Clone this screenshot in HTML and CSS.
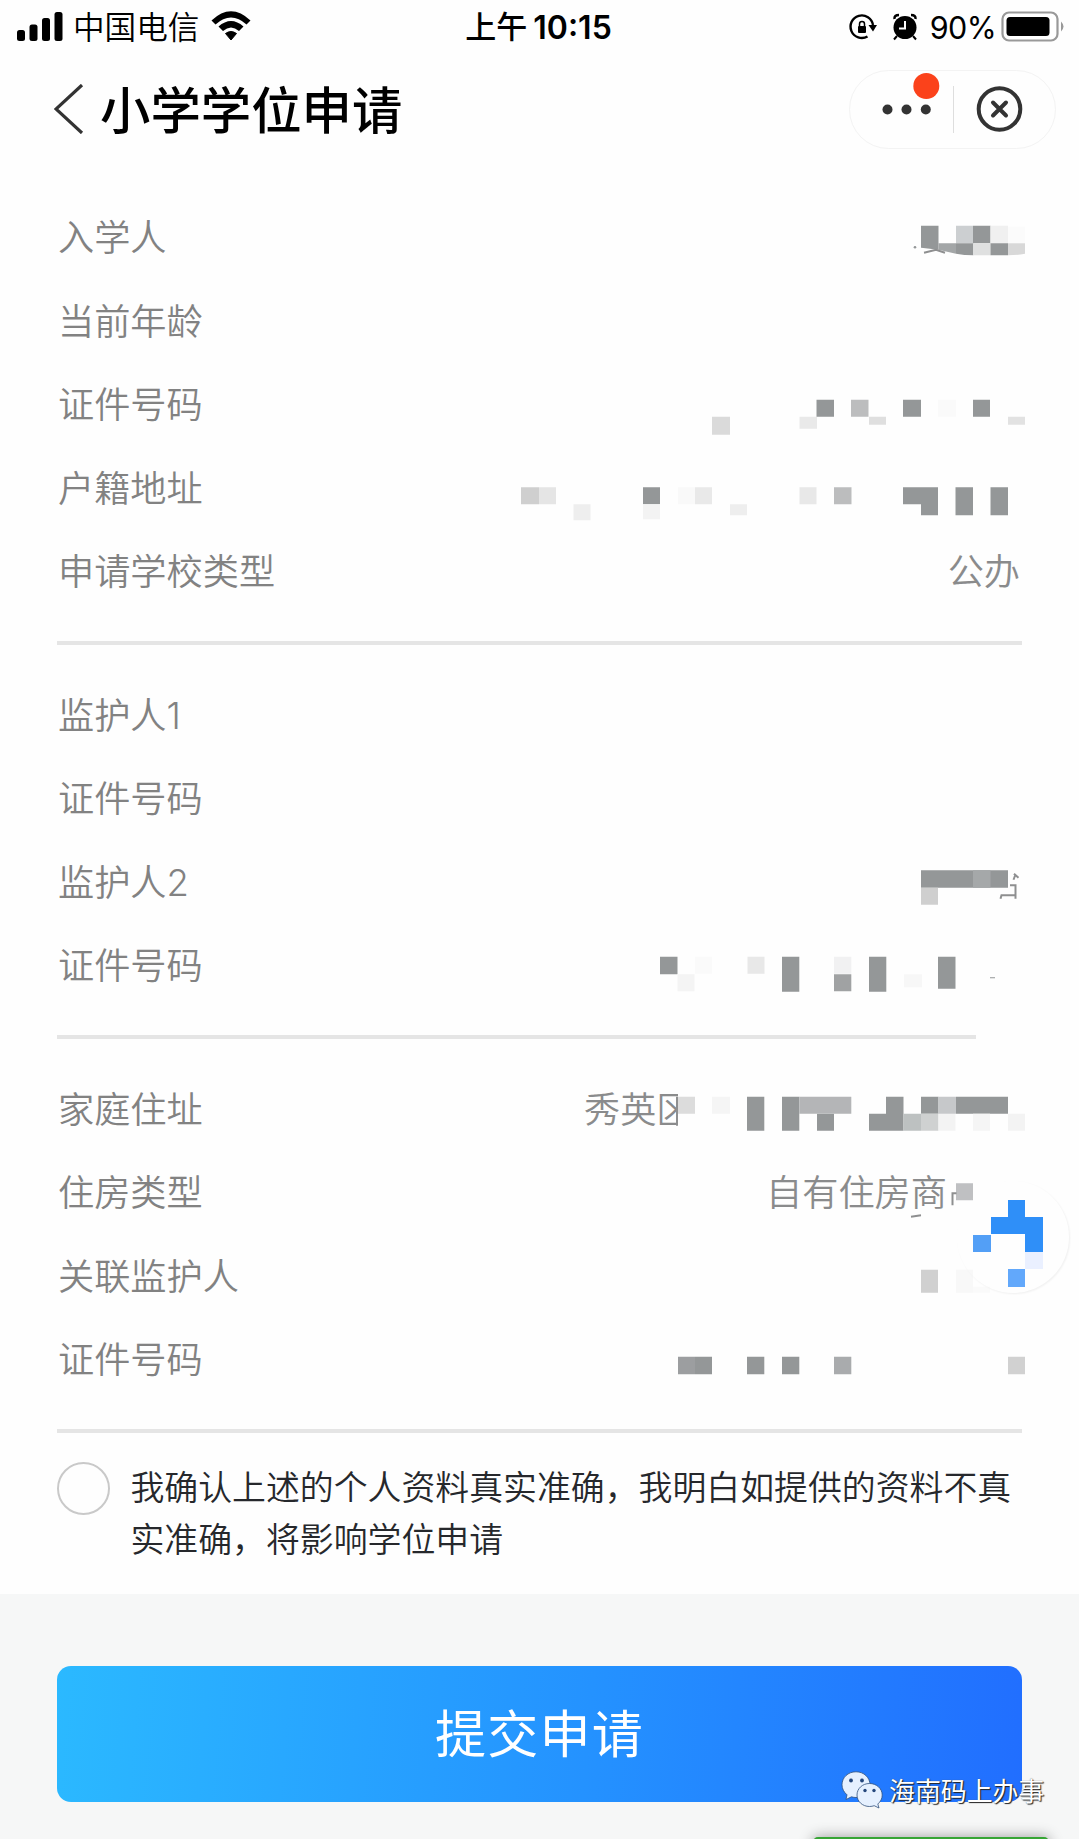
FILE: index.html
```html
<!DOCTYPE html>
<html lang="zh-CN">
<head>
<meta charset="utf-8">
<title>小学学位申请</title>
<link rel="stylesheet" href="styles.css">
</head>
<body>
<div class="screen">
  <header class="status">
    <div class="status-left">
      <svg class="signal" width="46" height="30" viewBox="0 0 46 30"><rect x="0" y="19" width="8" height="11" rx="2.5"/><rect x="12.5" y="13.500" width="8" height="16.500" rx="2.5"/><rect x="25" y="7" width="8" height="23" rx="2.5"/><rect x="37.500" y="1" width="8" height="29" rx="2.5"/></svg>
      <span class="carrier">中国电信</span>
      <svg class="wifi" width="40" height="30" viewBox="0 0 40 30"><path d="M.5 9.500Q20-9 39.500 9.500L35.500 13.500Q20-.5 4.500 13.500Z"/><path d="M7.500 15.500Q20 4.500 32.500 15.500L28 20Q20 13 12 20Z"/><path d="M14.500 22.500Q20 18.500 25.500 22.500L20 29Z" stroke="#000" stroke-linejoin="round"/></svg>
    </div>
    <div class="clock"><span class="ampm">上午</span><span class="time">10:15</span></div>
    <div class="status-right">
      <svg width="30" height="30" viewBox="0 0 30 30"><path d="M19.500 24.500A11.300 11.300 0 1 1 25 13" fill="none" stroke="#000" stroke-width="2.400"/><path d="M20.500 13h8.500l-4 6.500z"/><rect x="10" y="14" width="8" height="7" rx="1"/><path d="M11.500 14.500v-2.500a2.500 2.500 0 0 1 5 0v2.500" fill="none" stroke="#000" stroke-width="1.500"/></svg>
      <svg class="alarm" width="26" height="28" viewBox="0 0 26 28"><circle cx="13" cy="14.500" r="11.500"/><path d="M2.500 6Q2 2 7 2M23.500 6Q24 2 19 2" fill="none" stroke="#000" stroke-width="2.500"/><path d="M5 23l-3 3.500M21 23l3 3.500" stroke="#000" stroke-width="2"/><path d="M13 8v7.500H7" fill="none" stroke="#fff" stroke-width="2"/></svg>
      <span class="percent">90%</span>
      <svg class="battery" width="64" height="32" viewBox="0 0 64 32"><rect x="1.500" y="1.500" width="55" height="28" rx="6.500" fill="#fff" stroke="#999" stroke-width="2.200"/><rect x="5.500" y="6" width="43" height="19" rx="3.500"/><path d="M60 10.500q5 5 0 10z" fill="#999"/></svg>
    </div>
  </header>
  <nav class="navbar">
    <svg class="back" width="30" height="50" viewBox="0 0 30 50"><path d="M28 1L2 25l26 24" fill="none" stroke="#333" stroke-width="3.200"/></svg>
    <h1 class="title">小学学位申请</h1>
    <div class="capsule">
      <svg class="more" width="103" height="76" viewBox="0 0 103 76"><g fill="#333"><circle cx="37.500" cy="38.500" r="5"/><circle cx="56.500" cy="38.500" r="5"/><circle cx="75.800" cy="38.500" r="5"/></g><circle cx="76.300" cy="15" r="13" fill="#fb421b"/></svg>
      <svg class="close" width="102" height="76" viewBox="0 0 102 76"><path d="M.5 15v47" stroke="#dedede"/><circle cx="46.500" cy="38" r="20.800" fill="none" stroke="#333" stroke-width="4"/><path d="M40 31.500l13 13m0-13l-13 13" stroke="#333" stroke-width="4" stroke-linecap="round"/></svg>
    </div>
  </nav>
  <main class="form">
    <section class="group">
      <div class="row"><span class="label">入学人</span>
        <svg class="mosaic" width="122" height="83.5" viewBox="900 196.25 122 83.5">
          <path d="M921 226h17.500v24l-17.500-2z"/><rect x="956" y="226" width="17" height="17.500" fill="#cccfd1"/><rect x="973" y="226" width="17.500" height="17.500"/><rect x="990.500" y="226" width="17.500" height="17.500" fill="#f0f0f0"/><rect x="1008" y="227" width="17" height="16.500" fill="#fbfbfb"/>
          <path d="M938.500 243.500H956V254q-9-2-17.500-4z" fill="#a3a6a7"/><path d="M956 243.500h17.300v12q-9 0-17.300-1.500z"/><rect x="973.300" y="243.500" width="17.200" height="12" fill="#dfe0e0"/><rect x="990.500" y="243.500" width="17.500" height="12"/><path d="M1008 243.500h17v10.500q-8 1.500-17 1.500z" fill="#d8d8d8"/>
          <circle cx="915" cy="247.500" r="1.300"/><path d="M924 253l12-3 9 3" class="stroke"/>
        </svg></div>
      <div class="row"><span class="label">当前年龄</span></div>
      <div class="row"><span class="label">证件号码</span>
        <svg class="mosaic" width="322" height="83.5" viewBox="700 363.25 322 83.5">
          <rect x="712" y="417" width="18" height="18" fill="#dadada"/><rect x="799.500" y="417" width="17.500" height="12" fill="#e9e9e9"/><rect x="816.500" y="400" width="17.500" height="17"/><rect x="851" y="400" width="17.500" height="17" fill="#bcbdbe"/><rect x="869" y="417" width="17" height="8" fill="#dfdfdf"/><rect x="903" y="400" width="18" height="17"/><rect x="938" y="400" width="18" height="17" fill="#fafafa"/><rect x="973" y="400" width="17" height="17"/><rect x="1008" y="417" width="17" height="8" fill="#e2e2e2"/>
        </svg></div>
      <div class="row"><span class="label">户籍地址</span>
        <svg class="mosaic" width="522" height="83.5" viewBox="500 446.75 522 83.5">
          <rect x="521" y="487" width="18" height="17" fill="#cfcfcf"/><rect x="539" y="487" width="17" height="17" fill="#e5e5e5"/><rect x="573.500" y="504" width="17" height="16" fill="#eee"/><rect x="643" y="487" width="17" height="17"/><rect x="643" y="504" width="17" height="15" fill="#f3f3f3"/><rect x="678" y="487" width="17" height="17" fill="#f9f9f9"/><rect x="695" y="487" width="17" height="17" fill="#e9e9e9"/><rect x="730" y="504" width="17" height="11" fill="#eee"/><rect x="799.500" y="487" width="17" height="17" fill="#e8e8e8"/><rect x="834" y="487" width="17.500" height="17" fill="#bcbdbe"/><path d="M903 487h35v28h-17v-11h-18zM955.500 487h17.500v28h-17.500zM990.500 487h17.500v28h-17.500z"/>
        </svg></div>
      <div class="row"><span class="label">申请学校类型</span><span class="value value-end">公办</span></div>
    </section>
    <section class="group group-short">
      <div class="row"><span class="label">监护人<span class="digit">1</span></span></div>
      <div class="row"><span class="label">证件号码</span></div>
      <div class="row"><span class="label">监护人<span class="digit">2</span></span>
        <svg class="mosaic" width="122" height="83.5" viewBox="900 840.25 122 83.5">
          <rect x="921" y="869.500" width="87" height="17.500"/><rect x="973" y="869.500" width="17.500" height="17.500" fill="#a5a8a9"/><rect x="921" y="887" width="17" height="17" fill="#cfcfcf"/><path class="stroke" d="M1013.500 879l1.500-4m-1-2l4.500 4M1010 884.500h5.500V898m0-3.500h-14l-1 3.500"/>
        </svg></div>
      <div class="row"><span class="label">证件号码</span>
        <svg class="mosaic" width="382" height="83.5" viewBox="640 923.75 382 83.5">
          <rect x="660" y="956.500" width="17.500" height="17.500"/><rect x="695" y="956.500" width="17" height="17" fill="#fafafa"/><rect x="677.500" y="974" width="17" height="17" fill="#f4f4f4"/><rect x="747.500" y="956.500" width="17" height="17" fill="#e8e8e8"/><rect x="782" y="956.500" width="17.300" height="35"/><rect x="834" y="956.500" width="17.300" height="17" fill="#f1f1f2"/><rect x="834" y="974" width="17.300" height="17" fill="#a0a2a3"/><rect x="869" y="956.500" width="17.300" height="35"/><rect x="904" y="974" width="18" height="13" fill="#f7f7f7"/><rect x="938" y="956.500" width="17.500" height="32"/><rect x="990" y="977" width="5" height="1"/>
        </svg></div>
    </section>
    <section class="group">
      <div class="row"><span class="label">家庭住址</span><span class="value value-covered">秀英区</span>
        <svg class="mosaic" width="344" height="83.5" viewBox="678 1067.25 344 83.5">
          <rect x="678" y="1086" width="34" height="50" fill="#fefefe"/>
          <rect x="678" y="1096" width="17" height="17" fill="#dcdcdc"/><rect x="712" y="1096" width="18" height="17" fill="#f5f5f5"/><path d="M747 1096h17.300v34H747zM782 1096h17.300v34H782zM817 1113h17v17h-17zM886 1096h17.500v34H869v-17h17zM921 1096h17.500v17H921zM956 1096h52v17h-52z"/><rect x="799.300" y="1096" width="52" height="17" fill="#b4b5b7"/><rect x="903.500" y="1113" width="17.500" height="17" fill="#bdc1c1"/><rect x="921" y="1113" width="17.500" height="17" fill="#cfd1d1"/><rect x="938.500" y="1113" width="17" height="17" fill="#f3f3f3"/><rect x="938.500" y="1096" width="17.500" height="17" fill="#c6c8ca"/><rect x="973" y="1113" width="17" height="17" fill="#f5f5f5"/><rect x="1008" y="1113" width="17" height="17" fill="#f3f3f3"/>
          <path class="stroke" d="M677 1096v29"/>
        </svg></div>
      <div class="row"><span class="label">住房类型</span><span class="value">自有住房商</span>
        <svg class="mosaic" width="75" height="83.5" viewBox="947 1150.75 75 83.5">
          <rect x="956" y="1183" width="17" height="17" fill="#bfc0c2"/><path class="stroke" d="M952.500 1205v-12h4M911 1216.500l10-1.500"/>
        </svg></div>
      <div class="row"><span class="label">关联监护人</span>
        <svg class="mosaic" width="122" height="83.5" viewBox="900 1234.25 122 83.5">
          <rect x="921" y="1269" width="17" height="23" fill="#d0d0d0"/><rect x="956" y="1269" width="17" height="23" fill="#f8f8f8"/><rect x="973" y="1286" width="17" height="6" fill="#fafafa"/>
        </svg></div>
      <div class="row"><span class="label">证件号码</span>
        <svg class="mosaic" width="372" height="83.5" viewBox="650 1317.75 372 83.5">
          <rect x="678" y="1356.500" width="17" height="17.500" fill="#9c9ea0"/><rect x="695" y="1356.500" width="17" height="17.500"/><rect x="747" y="1356.500" width="17.300" height="17.500"/><rect x="782" y="1356.500" width="17.300" height="17.500"/><rect x="834" y="1356.500" width="17.300" height="17.500" fill="#a9abad"/><rect x="1008" y="1356.500" width="17" height="17.500" fill="#d1d1d1"/>
        </svg></div>
    </section>
    <label class="confirm">
      <span class="radio"></span>
      <span class="confirm-text">我确认上述的个人资料真实准确，我明白如提供的资料不真实准确，将影响学位申请</span>
    </label>
  </main>
  <footer class="footer">
    <button class="submit" type="button">提交申请</button>
  </footer>
  <div class="assistant">
    <svg width="112" height="112" viewBox="957 1181 112 112" shape-rendering="crispEdges"><path d="M1008 1200h17v17h17.500v35H1025v-18h-34.500v-17H1008z" fill="#2f8ff8"/><rect x="973" y="1235" width="17.500" height="17" fill="#539ff6"/><rect x="1025" y="1252" width="17.500" height="17" fill="#eaf0ff"/><rect x="1008" y="1269" width="17" height="18" fill="#62a8fb"/></svg>
  </div>
  <div class="watermark">
    <svg width="42" height="38" viewBox="0 0 42 38" fill="#e6f1ff" stroke="#30507c" stroke-width=".8"><path d="M15 .8C7 .8 1 6.500 1 13.800c0 4 2 7.500 5 10L5 28.500l5.500-2.700c1.500.5 3 .7 4.500.7 8 0 14-5.500 14-12.700S23 .8 15 .8z"/><path d="M28.500 12.500C21.500 12.500 16 17.500 16 24s5.500 11.500 12.500 11.500c1.700 0 3.300-.3 4.700-.8L38 37l-1.200-4c2.700-2.200 4.400-5.300 4.400-9 0-6.500-5.700-11.500-12.700-11.500z"/><g fill="#24477c" stroke="none"><circle cx="10" cy="9.500" r="1.900"/><circle cx="21" cy="9.500" r="1.900"/><circle cx="24" cy="19.500" r="1.700"/><circle cx="33" cy="19.500" r="1.700"/></g></svg>
    <span>海南码上办事</span>
  </div>
  <div class="bottom-card"></div>
</div>
</body>
</html>
```
FILE: styles.css
```css
* { box-sizing: border-box; }
body {
  margin: 0;
  background: #fefefe;
  font-family: "Noto Sans CJK SC", "Noto Sans", sans-serif;
}
svg { display: block; flex: none; }
.screen {
  position: relative;
  width: 1079px;
  height: 1839px;
  overflow: hidden;
  display: flex;
  flex-direction: column;
}

/* status bar */
.status {
  height: 54px;
  padding: 0 14px 0 17px;
  display: grid;
  grid-template-columns: 1fr auto 1fr;
  align-items: center;
  color: #000;
  font-size: 31px;
  line-height: 50px;
}
.status-left, .status-right, .clock { display: flex; align-items: center; }
.status-right { justify-content: flex-end; }
.signal { margin-top: -2px; }
.carrier { margin-left: 10px; font-size: 31.600px; font-weight: 350; padding-bottom: 4px; }
.wifi { margin-left: 12px; margin-top: -3px; }
.clock { gap: 6px; margin-left: -5px; }
.ampm { font-size: 31px; font-weight: 500; padding-bottom: 4px; }
.time { font-family: Inter, sans-serif; font-weight: 600; font-size: 32px; padding-top: 1px; }
.alarm { margin-left: 14px; margin-right: 12px; }
.percent { font-family: Inter, sans-serif; font-size: 30.5px; letter-spacing: -0.6px; padding-top: 1px; }
.battery { margin-left: 5px; margin-top: -1px; }

/* title bar */
.navbar {
  height: 110px;
  padding: 0 23px 0 54px;
  display: flex;
  align-items: center;
}
.title {
  margin: 0 auto 0 16px;
  padding-bottom: 3px;
  font-size: 50.4px;
  font-weight: 500;
  line-height: 70px;
  color: #000;
}
.capsule {
  display: flex;
  align-items: center;
  height: 79px;
  border: 1.500px solid #f3f3f3;
  border-radius: 40px;
}

/* form */
.form {
  height: 1430px;
  padding: 32.25px 57px 0;
}
.group { padding-bottom: 27.5px; margin-bottom: 29px; position: relative; }
.group::after {
  content: "";
  display: block;
  height: 3.5px;
  margin-top: 27.5px;
  margin-bottom: -27.5px;
  background: #e5e5e5;
}
.group-short::after { width: 919px; }
.row {
  height: 83.5px;
  display: flex;
  align-items: center;
  color: #828282;
  font-size: 36.2px;
  line-height: 54px;
  font-weight: 350;
  white-space: nowrap;
}
.label { margin-right: auto; padding: 0 0 6px 1px; }
.digit { font-family: Inter, sans-serif; font-size: 36.500px; font-weight: 350; line-height: 1; }
.value { color: #8a8b8c; padding-bottom: 6px; }
.value-end { margin-right: 2px; }
.value-covered { width: 94px; }
.mosaic { position: relative; overflow: visible; fill: #949798; }
.stroke { fill: none; stroke: #8e8f90; stroke-width: 2; }

.confirm { display: flex; align-items: flex-start; }
.radio {
  flex: none;
  width: 53px;
  height: 53px;
  border: 2.500px solid #c9c9c9;
  border-radius: 50%;
}
.confirm-text {
  margin: -2px 0 0 20.5px;
  font-size: 33.88px;
  line-height: 52px;
  font-weight: 350;
  color: #26282c;
  width: 886px;
  word-break: break-all;
}

/* submit area */
.footer {
  flex: 1;
  padding: 72px 57px 0;
  background: #f6f7f7;
}
.submit {
  display: block;
  width: 965px;
  height: 136px;
  border: 0;
  border-radius: 14px;
  padding: 0 0 5px;
  background: linear-gradient(95deg, #2bb9ff, #2492ff 55%, #216eff);
  color: #fff;
  font: 400 51px/131px "Noto Sans CJK SC", sans-serif;
  letter-spacing: 1.3px;
}

/* floating layers */
.assistant {
  position: absolute;
  left: 957px;
  top: 1181px;
  width: 112px;
  height: 112px;
  border-radius: 50%;
  box-shadow: 1px 1px 2px #f0f0f0;
}
.watermark {
  position: absolute;
  left: 841px;
  top: 1771px;
  display: flex;
  align-items: center;
  gap: 6px;
  color: #fff;
  font-size: 25.900px;
  line-height: 38px;
  text-shadow: 1px 1px 1px #222, 0 0 1px #555;
}
.bottom-card {
  position: absolute;
  left: 813px;
  top: 1837px;
  width: 236px;
  height: 60px;
  border-radius: 5px;
  background: #36a534;
  box-shadow: 0 0 14px #999;
}
```
